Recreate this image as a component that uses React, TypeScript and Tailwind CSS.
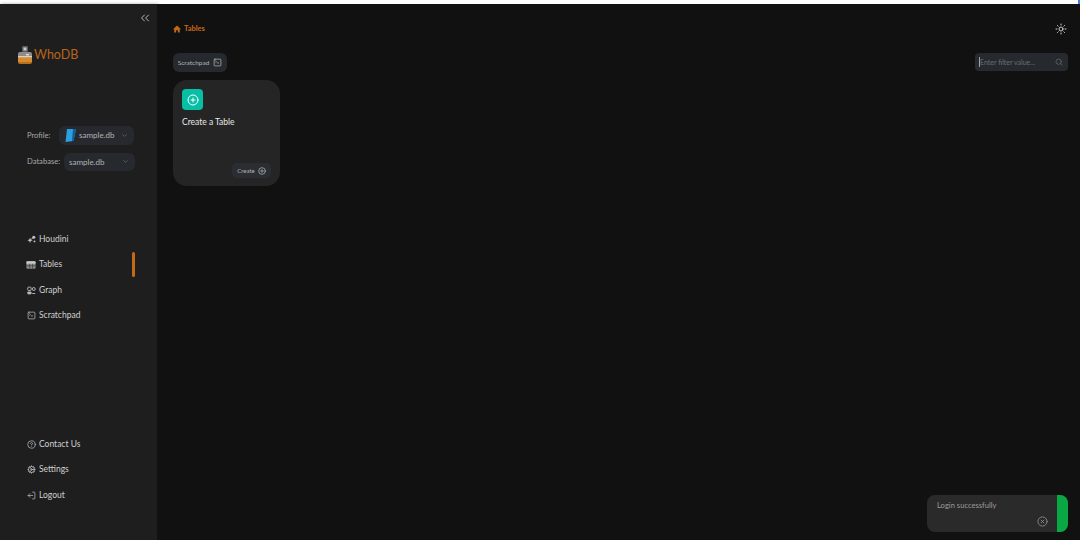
import { ChevronDown, ChevronsLeft, CirclePlus, CircleHelp, Cog, LogOut, Search, Sun, SquareTerminal, CircleX } from "lucide-react";
import type { ReactNode } from "react";

function Logo() {
  return (
    <svg width="16" height="18" viewBox="0 0 16 18" className="shrink-0">
      <rect x="5" y="0" width="6" height="6" rx="1" fill="#5c5c5c" />
      <rect x="6.5" y="1.5" width="3" height="3" fill="#c9c9c9" />
      <path d="M1 7.5 Q1 6 3 6 H13 Q15 6 15 7.5 V11 H1 Z" fill="#8d8d8d" />
      <rect x="1" y="11" width="14" height="5" fill="#d98a2b" />
      <rect x="1" y="10.2" width="14" height="1" fill="#e4e4e4" />
      <path d="M1 16 H15 Q15 18 13 18 H3 Q1 18 1 16 Z" fill="#b5701f" />
      <rect x="9" y="8" width="3" height="1.4" fill="#dcdcdc" />
    </svg>
  );
}

function DbIcon() {
  return (
    <svg width="11" height="13" viewBox="0 0 11 13" className="shrink-0">
      <path d="M2 0 H11 L8.5 12 L0.5 13 Z" fill="#2b9fe0" />
      <path d="M8 0 H11 L8.5 12 L7 12 Z" fill="#0f5f96" />
    </svg>
  );
}

function HoudiniIcon() {
  return (
    <svg width="9" height="9" viewBox="0 0 24 24" fill="#c4c4c4">
      <path d="M8 7 L10 12 L15 14 L10 16 L8 21 L6 16 L1 14 L6 12 Z" />
      <circle cx="18" cy="6" r="4" />
      <circle cx="20" cy="17" r="2.5" />
      <path d="M10 12 L17 7" stroke="#c4c4c4" strokeWidth="2" />
    </svg>
  );
}

function GraphIcon() {
  return (
    <svg width="9" height="9" viewBox="0 0 24 24" fill="none" stroke="#b8b8b8" strokeWidth="2.5">
      <rect x="2" y="3" width="9" height="9" rx="2" />
      <circle cx="18" cy="8" r="4" />
      <rect x="2" y="16" width="9" height="5" rx="1" fill="#b8b8b8" />
      <path d="M14 20h8" />
    </svg>
  );
}

function TableIcon() {
  return (
    <svg width="10" height="10" viewBox="0 0 24 24" fill="none">
      <rect x="1" y="3" width="22" height="18" rx="3" fill="#8e8e8e" />
      <rect x="1" y="3" width="22" height="6" rx="2" fill="#c8c8c8" />
      <path d="M1 14h22M9 9v12M16 9v12" stroke="#2a2a2a" strokeWidth="1.4" />
    </svg>
  );
}

function HomeIcon() {
  return (
    <svg width="8" height="8" viewBox="0 0 16 16" fill="#c46a16">
      <path d="M8 1 L16 8.5 H13.5 V15 H9.8 V10.5 H6.2 V15 H2.5 V8.5 H0 Z" />
    </svg>
  );
}

function NavItem({ icon, label, active }: { icon: ReactNode; label: string; active?: boolean }) {
  return (
    <div className="flex h-[25.5px] items-center gap-[3px] pl-[26px] pr-[22.5px]">
      <span className="flex w-[10px] items-center justify-center">{icon}</span>
      <span className="text-[8.5px] text-[#d0d0d0]">{label}</span>
      {active && <span className="ml-auto h-[25px] w-[3px] rounded-full bg-[#c46a16]" />}
    </div>
  );
}

export default function App() {
  const i = "text-[#b8b8b8]";
  return (
    <div className="flex h-[540px] w-[1080px] flex-col overflow-hidden bg-white font-['Lato',sans-serif]">
      <div className="flex h-[4px] shrink-0 justify-end">
        <div className="h-[4px] w-[2px] bg-[#4a7fd6]" />
      </div>
      <div className="flex min-h-0 flex-1">
        <aside className="flex w-[157px] shrink-0 flex-col bg-[#1e1e1e] shadow-[1px_0_3px_rgba(0,0,0,0.35)]">
          <div className="flex justify-end pr-[5px] pt-[7px]">
            <ChevronsLeft size={14} strokeWidth={1.4} className="text-[#d8d8d8]" />
          </div>
          <div className="mt-[21px] flex items-center gap-[1px] pl-[17px]">
            <Logo />
            <span className="text-[12.5px] text-[#b8651a]">WhoDB</span>
          </div>
          <div className="mt-[61px] flex flex-col gap-[8px] pl-[27px]">
            <div className="flex items-center">
              <span className="w-[32px] text-[7.6px] text-[#a8a8a8]">Profile:</span>
              <div className="flex h-[19px] w-[75px] items-center rounded-[6px] bg-[#26292e] pl-[6px] pr-[6px]">
                <DbIcon />
                <span className="ml-[3px] text-[8px] text-[#b4b4b4]">sample.db</span>
                <ChevronDown size={7} className="ml-auto text-[#777]" />
              </div>
            </div>
            <div className="flex items-center">
              <span className="w-[37px] text-[7.6px] text-[#a8a8a8]">Database:</span>
              <div className="flex h-[18px] w-[71px] items-center rounded-[6px] bg-[#26292e] pl-[5px] pr-[6px]">
                <span className="text-[8px] text-[#b4b4b4]">sample.db</span>
                <ChevronDown size={7} className="ml-auto text-[#777]" />
              </div>
            </div>
          </div>
          <nav className="mt-[55.5px] flex flex-col">
            <NavItem icon={<HoudiniIcon />} label="Houdini" />
            <NavItem icon={<TableIcon />} label="Tables" active />
            <NavItem icon={<GraphIcon />} label="Graph" />
            <NavItem icon={<SquareTerminal size={9} className={i} />} label="Scratchpad" />
          </nav>
          <nav className="mt-auto mb-[32px] flex flex-col">
            <NavItem icon={<CircleHelp size={9} className={i} />} label="Contact Us" />
            <NavItem icon={<Cog size={9} className={i} />} label="Settings" />
            <NavItem icon={<LogOut size={9} className={`${i} rotate-180`} />} label="Logout" />
          </nav>
        </aside>
        <main className="relative flex min-w-0 flex-1 flex-col bg-[#111111] pl-[16px] pr-[12px]">
          <div className="flex h-[49px] shrink-0 items-center justify-between pr-[1px]">
            <div className="flex items-center gap-[3px] text-[#c46a16]">
              <HomeIcon />
              <span className="text-[7.5px] font-bold">Tables</span>
            </div>
            <Sun size={12} className="text-[#d0d0d0]" />
          </div>
          <div className="flex items-start justify-between">
            <div className="flex h-[19px] w-[54px] items-center justify-center gap-[4px] rounded-[6px] bg-[#26292e]">
              <span className="text-[6.5px] text-[#b4b4b4]">Scratchpad</span>
              <SquareTerminal size={9} className="text-[#b4b4b4]" />
            </div>
            <div className="flex h-[18px] w-[93px] items-center rounded-[4px] bg-[#26292e] pl-[4px] pr-[5px]">
              <span className="h-[10px] w-px bg-[#a0a0a0]" />
              <span className="text-[7px] text-[#6b6f75]">Enter filter value...</span>
              <Search size={8} className="ml-auto text-[#6b6f75]" />
            </div>
          </div>
          <section className="mt-[8px] flex h-[106px] w-[107px] flex-col rounded-[14px] bg-[#252525] p-[9px] pb-[8px]">
            <div className="flex h-[21px] w-[21px] items-center justify-center rounded-[4px] bg-[#07bfa5]">
              <CirclePlus size={12} className="text-white" />
            </div>
            <span className="mt-[6px] text-[8.5px] text-[#e8e8e8]">Create a Table</span>
            <div className="mt-auto flex justify-end">
              <div className="flex h-[15px] w-[39px] items-center justify-center gap-[3px] rounded-[5px] bg-[#2a2d32]">
                <span className="text-[6px] text-[#b4b4b4]">Create</span>
                <CirclePlus size={8} className="text-[#c4c4c4]" />
              </div>
            </div>
          </section>
          <div className="absolute bottom-[8px] right-[12px] flex h-[37px] w-[141px] overflow-hidden rounded-[8px] bg-[#2a2a2a]">
            <div className="relative flex-1 pl-[10px] pt-[5px]">
              <span className="block text-[7.6px] text-[#9c9c9c]">Login successfully</span>
              <CircleX size={11} className="absolute bottom-[5px] right-[9px] text-[#8a8a8a]" />
            </div>
            <div className="w-[11px] bg-[#0aa844]" />
          </div>
        </main>
      </div>
    </div>
  );
}
